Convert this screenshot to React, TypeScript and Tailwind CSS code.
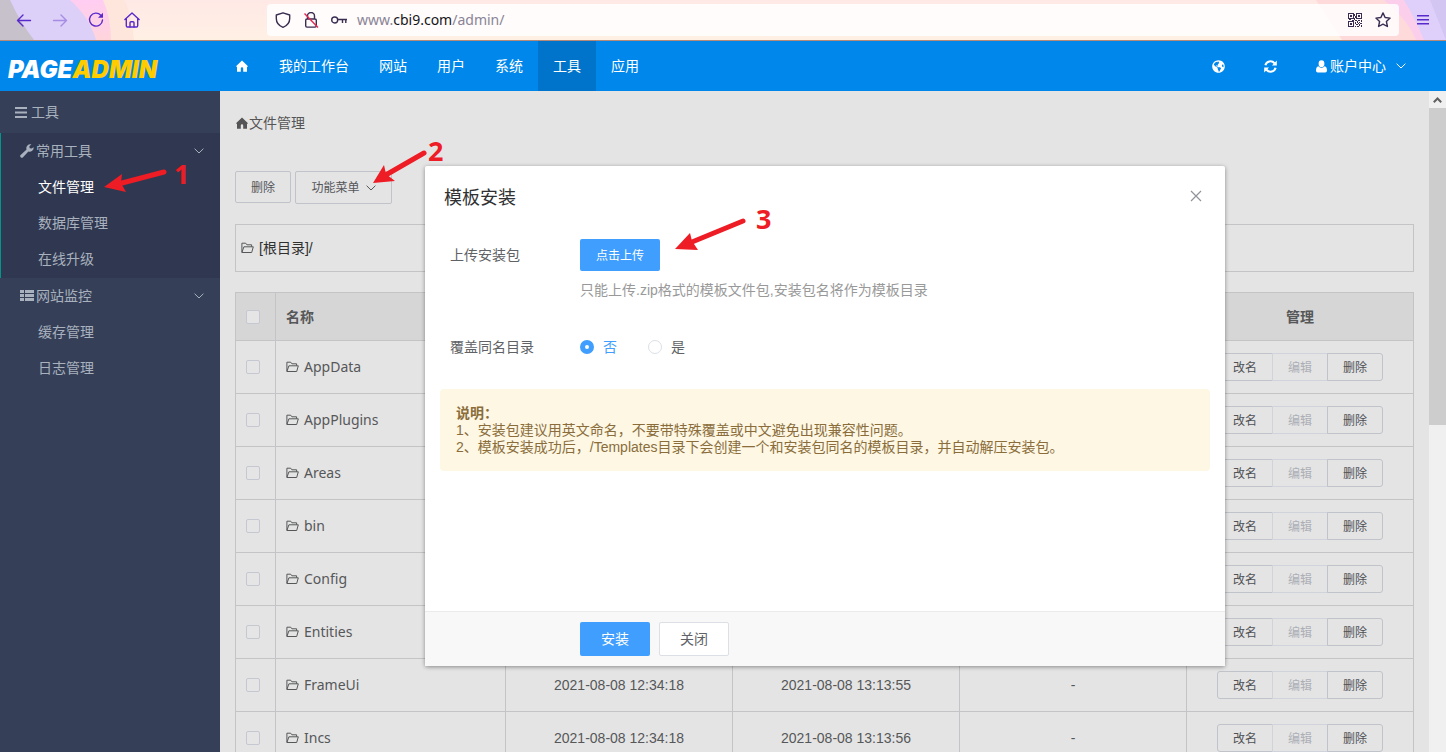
import { useState } from "react";
import type { ReactNode } from "react";
import { FaGlobeAmericas } from "react-icons/fa";

const NAV = ["我的工作台", "网站", "用户", "系统", "工具", "应用"];

const SIDE_GROUPS = [
  { title: "常用工具", icon: "wrench", open: true, items: ["文件管理", "数据库管理", "在线升级"] },
  { title: "网站监控", icon: "list", open: false, items: ["缓存管理", "日志管理"] },
];

type Folder = { name: string; created?: string; updated?: string; size?: string };

const FOLDERS: Folder[] = [
  { name: "AppData" },
  { name: "AppPlugins" },
  { name: "Areas" },
  { name: "bin" },
  { name: "Config" },
  { name: "Entities" },
  { name: "FrameUi", created: "2021-08-08 12:34:18", updated: "2021-08-08 13:13:55", size: "-" },
  { name: "Incs", created: "2021-08-08 12:34:18", updated: "2021-08-08 13:13:56", size: "-" },
];

function HomeSolid({ className }: { className?: string }) {
  return (
    <svg viewBox="0 0 12 12" className={className} fill="currentColor" aria-hidden="true">
      <path d="M6 .4 0 6.2 1 7v4.8h3.8V8.4a1.2 1.2 0 0 1 2.4 0v3.4H11V7l1-.8z" />
    </svg>
  );
}

function Chevron({ className }: { className?: string }) {
  return (
    <svg viewBox="0 0 10 6" className={className} fill="none" stroke="currentColor" aria-hidden="true">
      <path d="M.6.7 5 5 9.4.7" />
    </svg>
  );
}

function FolderOpen({ className }: { className?: string }) {
  return (
    <svg viewBox="0 0 13 12" className={className} fill="none" stroke="currentColor" aria-hidden="true">
      <path d="M.9 10.3V1.2h3.8l1.2 1.6h4.7v1.9M.9 10.5l2-5.7h9.4l-1.6 5.7z" strokeLinejoin="round" />
    </svg>
  );
}

function Wrench() {
  return (
    <svg viewBox="0 0 13 13" className="h-[14px] w-[14px]" fill="currentColor" aria-hidden="true">
      <path d="M12.7 3.1a3.7 3.7 0 0 1-4.9 3.8l-5 5.3a1.5 1.5 0 0 1-2.2-2.1l5.5-5A3.7 3.7 0 0 1 10.6.3L8.7 2.2l.3 1.7 1.7.3z" />
    </svg>
  );
}

function ListIcon() {
  return (
    <svg viewBox="0 0 14 12" className="h-3 w-[14px]" fill="currentColor" aria-hidden="true">
      <path d="M0 0h4v3H0zM5 0h9v3H5zM0 4h4v3H0zM5 4h9v3H5zM0 8h4v3H0zM5 8h9v3H5z" />
    </svg>
  );
}

function BrowserBar() {
  return (
    <div className="relative isolate flex h-[41px] shrink-0 items-center border-b border-[#b58a78] bg-[linear-gradient(#ffe9e6,#fff0e4)]">
      <svg viewBox="0 0 140 40" className="absolute top-0 left-0 -z-10 h-10 w-[140px]" aria-hidden="true">
        <defs>
          <linearGradient id="petal" x1="0" y1="0" x2="0" y2="1">
            <stop offset="0" stopColor="#ffcdf2" />
            <stop offset="1" stopColor="#ffd5dc" />
          </linearGradient>
        </defs>
        <path d="M0 0h125q7 18 9 40H0z" fill="#ffe6dc" />
        <path d="M0 0h103q8 18 8 40H0z" fill="url(#petal)" />
        <path d="M0 0h70q20 18 26 40H0z" fill="#dccff8" />
        <path d="M0 0h10q10 22 24 40H0z" fill="#c6c1cb" />
      </svg>
      <svg viewBox="0 0 140 40" className="absolute top-0 right-0 -z-10 h-10 w-[140px]" aria-hidden="true">
        <path d="M10 0h130v40H36z" fill="#ffdadb" />
        <path d="M50 0h90v40H110q-8-20-32-40z" fill="#fbcfeb" />
        <path d="M64 0h76v40H118Q108 16 98 0z" fill="#decffb" />
        <path d="M124 0h16v40z" fill="#d3c6f2" />
      </svg>

      <div className="flex h-10 w-[267px] items-center gap-5 pl-4 text-[#592acb]">
        <button aria-label="后退">
          <svg viewBox="0 0 16 16" className="h-4 w-4" fill="none" stroke="currentColor" strokeWidth="1.4" strokeLinecap="round" strokeLinejoin="round">
            <path d="M14.5 8.500h-13M7 3 1.500 8.500 7 14" />
          </svg>
        </button>
        <button aria-label="前进" className="opacity-40">
          <svg viewBox="0 0 16 16" className="h-4 w-4" fill="none" stroke="currentColor" strokeWidth="1.4" strokeLinecap="round" strokeLinejoin="round">
            <path d="M1.5 8.500h13M9 3l5.500 5.500L9 14" />
          </svg>
        </button>
        <button aria-label="刷新">
          <svg viewBox="0 0 16 16" className="h-4 w-4" fill="none" stroke="currentColor" strokeWidth="1.4" strokeLinecap="round">
            <path d="M12.800 3.200A6.500 6.500 0 1 0 14.500 8" />
            <path d="M15 .8v5h-5z" fill="currentColor" stroke="none" />
          </svg>
        </button>
        <button aria-label="主页">
          <svg viewBox="0 0 16 16" className="h-4 w-4" fill="none" stroke="currentColor" strokeWidth="1.4" strokeLinejoin="round" strokeLinecap="round">
            <path d="M.9 7.500 8 1l7.100 6.500M2.300 6.500v7.300q0 1.200 1.200 1.200h9q1.200 0 1.200-1.200V6.500" />
            <path d="M6 15v-4.200q0-1 1-1h2q1 0 1 1V15" />
          </svg>
        </button>
      </div>

      <div className="flex h-8 flex-1 items-center rounded bg-white/85 px-2 text-[#3a2d52]">
        <svg viewBox="0 0 16 16" className="mr-3 h-4 w-4" fill="none" stroke="currentColor" strokeWidth="1.4" strokeLinejoin="round" aria-hidden="true">
          <path d="M8 .8 14.700 3v3.500c0 4-2.600 7.200-6.700 8.800C3.900 13.700 1.300 10.500 1.300 6.500V3z" />
        </svg>
        <svg viewBox="0 0 16 16" className="mr-3 h-4 w-4" fill="none" strokeWidth="1.4" strokeLinejoin="round" aria-hidden="true">
          <path d="M4.500 7V4a3.500 3.500 0 0 1 7 0v3M2.700 8.300q0-1.300 1.300-1.300h8q1.300 0 1.300 1.300v5.500q0 1.300-1.300 1.300H4q-1.300 0-1.300-1.300z" stroke="currentColor" />
          <path d="m1.500 1.500 13.500 14" stroke="#e22850" />
        </svg>
        <svg viewBox="0 0 16 10" className="mr-[10px] h-[10px] w-4" fill="none" stroke="currentColor" strokeWidth="1.4" aria-hidden="true">
          <circle cx="3.700" cy="5" r="3" />
          <path d="M6.700 4.500H16M11.500 4.500V8M14.800 4.500V8" />
        </svg>
        <span className="font-['Noto_Sans'] text-sm text-[#8a8496]">
          www.<span className="text-[#15141a]">cbi9.com</span>/admin/
        </span>
        <svg viewBox="0 0 14 14" className="mr-[13px] ml-auto h-[14px] w-[14px]" fill="currentColor" shapeRendering="crispEdges" aria-hidden="true">
          <path
            fillRule="evenodd"
            d="M0 0h6v6H0zM1 1v4h4V1zM8 0h6v6H8zM9 1v4h4V1zM0 8h6v6H0zM1 9v4h4V9zM2 2h2v2H2zM10 2h2v2h-2zM2 10h2v2H2zM6 1h1v2H6zM7 3h1v2H7zM6 5h1v2H6zM7 7h2v1H7zM1 6h2v1H1zM4 7h2v1H4zM10 7h2v1h-2zM13 7h1v2h-1zM7 9h1v2H7zM9 8h1v2H9zM11 9h1v1h-1zM8 11h2v1H8zM10 10h1v1h-1zM12 10h2v1h-2zM7 13h1v1H7zM9 13h2v1H9zM11 11h1v2h-1zM13 12h1v2h-1z"
          />
        </svg>
        <svg viewBox="0 0 16 16" className="h-4 w-4" fill="none" stroke="currentColor" strokeWidth="1.4" strokeLinejoin="round" aria-hidden="true">
          <path d="m8 .9 2.100 4.600 5 .6-3.700 3.400 1 5L8 12.100l-4.400 2.400 1-5L.9 6.100l5-.6z" />
        </svg>
      </div>

      <div className="flex h-10 w-[47px] items-center justify-center text-[#592acb]">
        <button aria-label="菜单">
          <svg viewBox="0 0 12 10" className="h-[10px] w-3" stroke="currentColor" strokeWidth="1.4">
            <path d="M0 .7h12M0 4.700h12M0 8.700h12" />
          </svg>
        </button>
      </div>
    </div>
  );
}

function Header() {
  return (
    <header className="flex h-[50px] shrink-0 items-center bg-[#0087eb] text-sm text-white">
      <a href="#" className="w-[220px] shrink-0 pt-2 pl-2 font-['Inter'] text-2xl font-black italic">
        PAGE<span className="text-[#ffcc00]">ADMIN</span>
      </a>
      <nav className="flex h-full flex-1 items-center">
        <a href="#" aria-label="首页" className="px-4">
          <HomeSolid className="h-3 w-3" />
        </a>
        {NAV.map((label) => (
          <a
            key={label}
            href="#"
            className={`flex h-full items-center px-[15px] ${label === "工具" ? "bg-[#0074cb]" : ""}`}
          >
            {label}
          </a>
        ))}
      </nav>
      <div className="flex items-center pr-10">
        <button aria-label="语言" className="mr-[39px]">
          <FaGlobeAmericas className="h-[13px] w-[13px]" />
        </button>
        <button aria-label="刷新页面" className="mr-[39px]">
          <svg viewBox="0 0 14 14" className="h-[13px] w-[13px]" fill="none" stroke="currentColor" strokeWidth="2.200">
            <path d="M1.500 5.600A5.600 5.600 0 0 1 11.300 3.500M12.500 8.400A5.600 5.600 0 0 1 2.700 10.500" />
            <path d="M13.800.6v5.200H8.600zM.2 13.400V8.200h5.200z" fill="currentColor" stroke="none" />
          </svg>
        </button>
        <button className="flex items-center">
          <svg viewBox="0 0 11 13" className="mr-[3px] h-[13px] w-[11px]" fill="currentColor" aria-hidden="true">
            <ellipse cx="5.500" cy="3.700" rx="2.900" ry="3.400" />
            <path d="M2.400 6.200Q5.500 9.400 8.600 6.200 11 6.800 11 10.500q0 2-1.800 2H1.800Q0 12.500 0 10.500 0 6.800 2.400 6.200z" />
          </svg>
          账户中心
          <Chevron className="ml-[10px] h-[6px] w-[10px]" />
        </button>
      </div>
    </header>
  );
}

function Sidebar() {
  return (
    <aside className="w-[220px] shrink-0 bg-[#354058] text-sm text-[#a9b1be]">
      <div className="flex h-[42px] items-center gap-1 pl-[15px]">
        <svg viewBox="0 0 12 11" className="h-[11px] w-3" fill="currentColor" aria-hidden="true">
          <path d="M0 0h12v2H0zM0 4.500h12v2H0zM0 9h12v2H0z" />
        </svg>
        工具
      </div>
      {SIDE_GROUPS.map((group) => (
        <div key={group.title} className={group.open ? "border-l border-[#009688] bg-[#2f3850] pb-px" : "border-l border-transparent"}>
          <button className="flex h-9 w-full items-center gap-[2px] pr-4 pl-[19px]">
            {group.icon === "wrench" ? <Wrench /> : <ListIcon />}
            {group.title}
            <Chevron className="ml-auto h-[6px] w-[10px]" />
          </button>
          <ul>
            {group.items.map((item) => (
              <li key={item}>
                <a href="#" className={`flex h-9 items-center pl-[37px] ${item === "文件管理" ? "text-white" : ""}`}>
                  {item}
                </a>
              </li>
            ))}
          </ul>
        </div>
      ))}
    </aside>
  );
}

function FileTable() {
  return (
    <table className="w-full table-fixed border-collapse text-sm text-[#565759]">
      <colgroup>
        <col className="w-10" />
        <col className="w-[230px]" />
        <col />
        <col />
        <col />
        <col />
      </colgroup>
      <thead>
        <tr className="h-12 bg-[#d6d6d6]">
          <Th>
            <Check label="全选" />
          </Th>
          <th className="border border-[#c4c4c6] px-[10px] text-left">名称</th>
          <Th>创建时间</Th>
          <Th>修改时间</Th>
          <Th>大小</Th>
          <Th>管理</Th>
        </tr>
      </thead>
      <tbody>
        {FOLDERS.map((folder) => (
          <tr key={folder.name} className="h-[53px] text-center">
            <Td>
              <Check label={folder.name} />
            </Td>
            <td className="border border-[#c4c4c6] px-[10px]">
              <a href="#" className="flex items-center gap-[5px] font-['Noto_Sans']">
                <FolderOpen className="h-3 w-[13px]" />
                {folder.name}
              </a>
            </td>
            <Td>{folder.created}</Td>
            <Td>{folder.updated}</Td>
            <Td>{folder.size}</Td>
            <Td>
              <div className="flex justify-center text-xs text-[#505155]">
                <button className="h-7 w-14 rounded-l-[3px] border border-[#c1c3ca] pt-[2px]">改名</button>
                <button disabled className="-ml-px h-7 w-14 border border-[#d0d3dc] pt-[2px] text-[#acafb6]">
                  编辑
                </button>
                <button className="-ml-px h-7 w-14 rounded-r-[3px] border border-[#c1c3ca] pt-[2px]">删除</button>
              </div>
            </Td>
          </tr>
        ))}
      </tbody>
    </table>
  );
}

function Th({ children }: { children: ReactNode }) {
  return <th className="border border-[#c4c4c6]">{children}</th>;
}

function Td({ children }: { children: ReactNode }) {
  return <td className="border border-[#c4c4c6]">{children}</td>;
}

function Check({ label }: { label: string }) {
  return (
    <input
      type="checkbox"
      aria-label={label}
      className="mr-[6px] block h-[14px] w-[14px] appearance-none justify-self-center rounded-[2px] border border-[#c5c8d0] bg-[#e5e5e5]"
    />
  );
}

function InstallDialog() {
  const [overwrite, setOverwrite] = useState("否");

  return (
    <div
      role="dialog"
      aria-label="模板安装"
      className="flex h-[500px] w-[800px] flex-col rounded-[2px] bg-white text-sm text-[#606266] shadow-[0_1px_4px_rgba(0,0,0,0.4)]"
    >
      <div className="flex h-[62px] items-center justify-between pr-[23px] pl-[19px]">
        <h2 className="pt-[2px] text-lg text-[#303133]">模板安装</h2>
        <button aria-label="关闭窗口" className="pb-[2px] text-[#909399]">
          <svg viewBox="0 0 12 12" className="h-3 w-3" fill="none" stroke="currentColor" strokeWidth="1.2">
            <path d="m1 1 10 10M11 1 1 11" />
          </svg>
        </button>
      </div>

      <div className="flex-1 px-[15px] pt-[11px]">
        <div className="flex pl-[10px]">
          <span className="w-[130px] leading-8">上传安装包</span>
          <div>
            <button className="h-8 w-20 rounded-[2px] bg-[#409eff] pt-[2px] text-xs text-white">点击上传</button>
            <p className="mt-[7px] leading-6 text-[#999999]">只能上传.zip格式的模板文件包,安装包名将作为模板目录</p>
          </div>
        </div>

        <fieldset className="mt-[33px] flex items-center pl-[10px]">
          <legend className="float-left w-[130px] leading-6">覆盖同名目录</legend>
          {["否", "是"].map((option) => (
            <label
              key={option}
              className={`mr-[31px] flex items-center gap-[9px] leading-6 ${overwrite === option ? "text-[#409eff]" : ""}`}
            >
              <input
                type="radio"
                name="overwrite"
                checked={overwrite === option}
                onChange={() => setOverwrite(option)}
                className="h-[14px] w-[14px] appearance-none rounded-full border border-[#dcdfe6] bg-white checked:border-[5px] checked:border-[#409eff]"
              />
              {option}
            </label>
          ))}
        </fieldset>

        <div className="mt-[30px] rounded-[4px] bg-[#fdf7e4] px-4 pt-4 pb-[15px] leading-[17px] text-[#8a6d3b]">
          <strong>说明：</strong>
          <p>1、安装包建议用英文命名，不要带特殊覆盖或中文避免出现兼容性问题。</p>
          <p>2、模板安装成功后，/Templates目录下会创建一个和安装包同名的模板目录，并自动解压安装包。</p>
        </div>
      </div>

      <div className="flex h-[55px] items-center gap-[9px] border-t border-[#ebebeb] bg-[#f8f8f8] pl-[155px]">
        <button className="h-[34px] w-[70px] rounded-[2px] bg-[#409eff] text-white">安装</button>
        <button className="h-[34px] w-[70px] rounded-[2px] border border-[#dcdfe6] bg-white">关闭</button>
      </div>
    </div>
  );
}

// Numbered step markers laid over the page
function Annotations() {
  return (
    <svg
      viewBox="0 0 800 260"
      className="pointer-events-none absolute top-0 left-0 h-[260px] w-[800px] fill-[#ee1c24] font-['Noto_Sans'] text-[27px] font-bold"
      aria-hidden="true"
    >
      <g stroke="#ee1c24" strokeWidth="5" strokeLinecap="round">
        <path d="M164 172 122 183" />
        <path d="M424 153 384 176" />
        <path d="M743 221 692 242" />
      </g>
      <path d="M104 187 122 174 121 183 126 192z" />
      <path d="M373 183 384 165 386 174 395 181z" />
      <path d="M675 249 690 233 692 241 698 250z" />
      <text x="174" y="184">1</text>
      <text x="428" y="161">2</text>
      <text x="756" y="229">3</text>
    </svg>
  );
}

export default function App() {
  return (
    <div className="relative flex h-screen flex-col overflow-hidden bg-[#e4e4e4] font-['Liberation_Sans','Noto_Sans_CJK_SC',sans-serif]">
      <BrowserBar />
      <Header />
      <div className="flex min-h-0 flex-1">
        <Sidebar />
        <main className="relative min-w-0 flex-1 overflow-hidden px-[15px]">
          <div className="flex h-16 items-center gap-px text-sm text-[#555555]">
            <HomeSolid className="ml-px h-3 w-3" />
            文件管理
          </div>
          <div className="mt-4 flex items-start gap-1 text-xs text-[#555659]">
            <button className="h-8 w-14 rounded-[2px] border border-[#c1c3ca] pt-[2px]">删除</button>
            <button className="flex h-[33px] w-[97px] items-center justify-center gap-[6px] rounded-[2px] border border-[#c1c3ca]">
              功能菜单
              <Chevron className="h-[6px] w-[10px]" />
            </button>
          </div>
          <div className="mt-5 mb-5 flex h-12 items-center gap-[5px] border border-[#c4c4c6] px-[5px] text-sm text-[#303030]">
            <FolderOpen className="h-3 w-[13px] text-[#565759]" />
            [根目录]/
          </div>
          <FileTable />
          <div className="absolute inset-0 flex items-start justify-center pt-[75px] pl-px">
            <InstallDialog />
          </div>
        </main>
        <div className="flex w-[17px] shrink-0 flex-col bg-[#f0f0f0]">
          <div className="flex h-[17px] items-center justify-center text-[#606060]">
            <svg viewBox="0 0 9 6" className="h-[6px] w-[9px]" fill="none" stroke="currentColor" strokeWidth="2" aria-hidden="true">
              <path d="M.8 5.200 4.500 1.500l3.700 3.700" />
            </svg>
          </div>
          <div className="h-[48%] bg-[#cdcdcd]" />
        </div>
      </div>
      <Annotations />
    </div>
  );
}
